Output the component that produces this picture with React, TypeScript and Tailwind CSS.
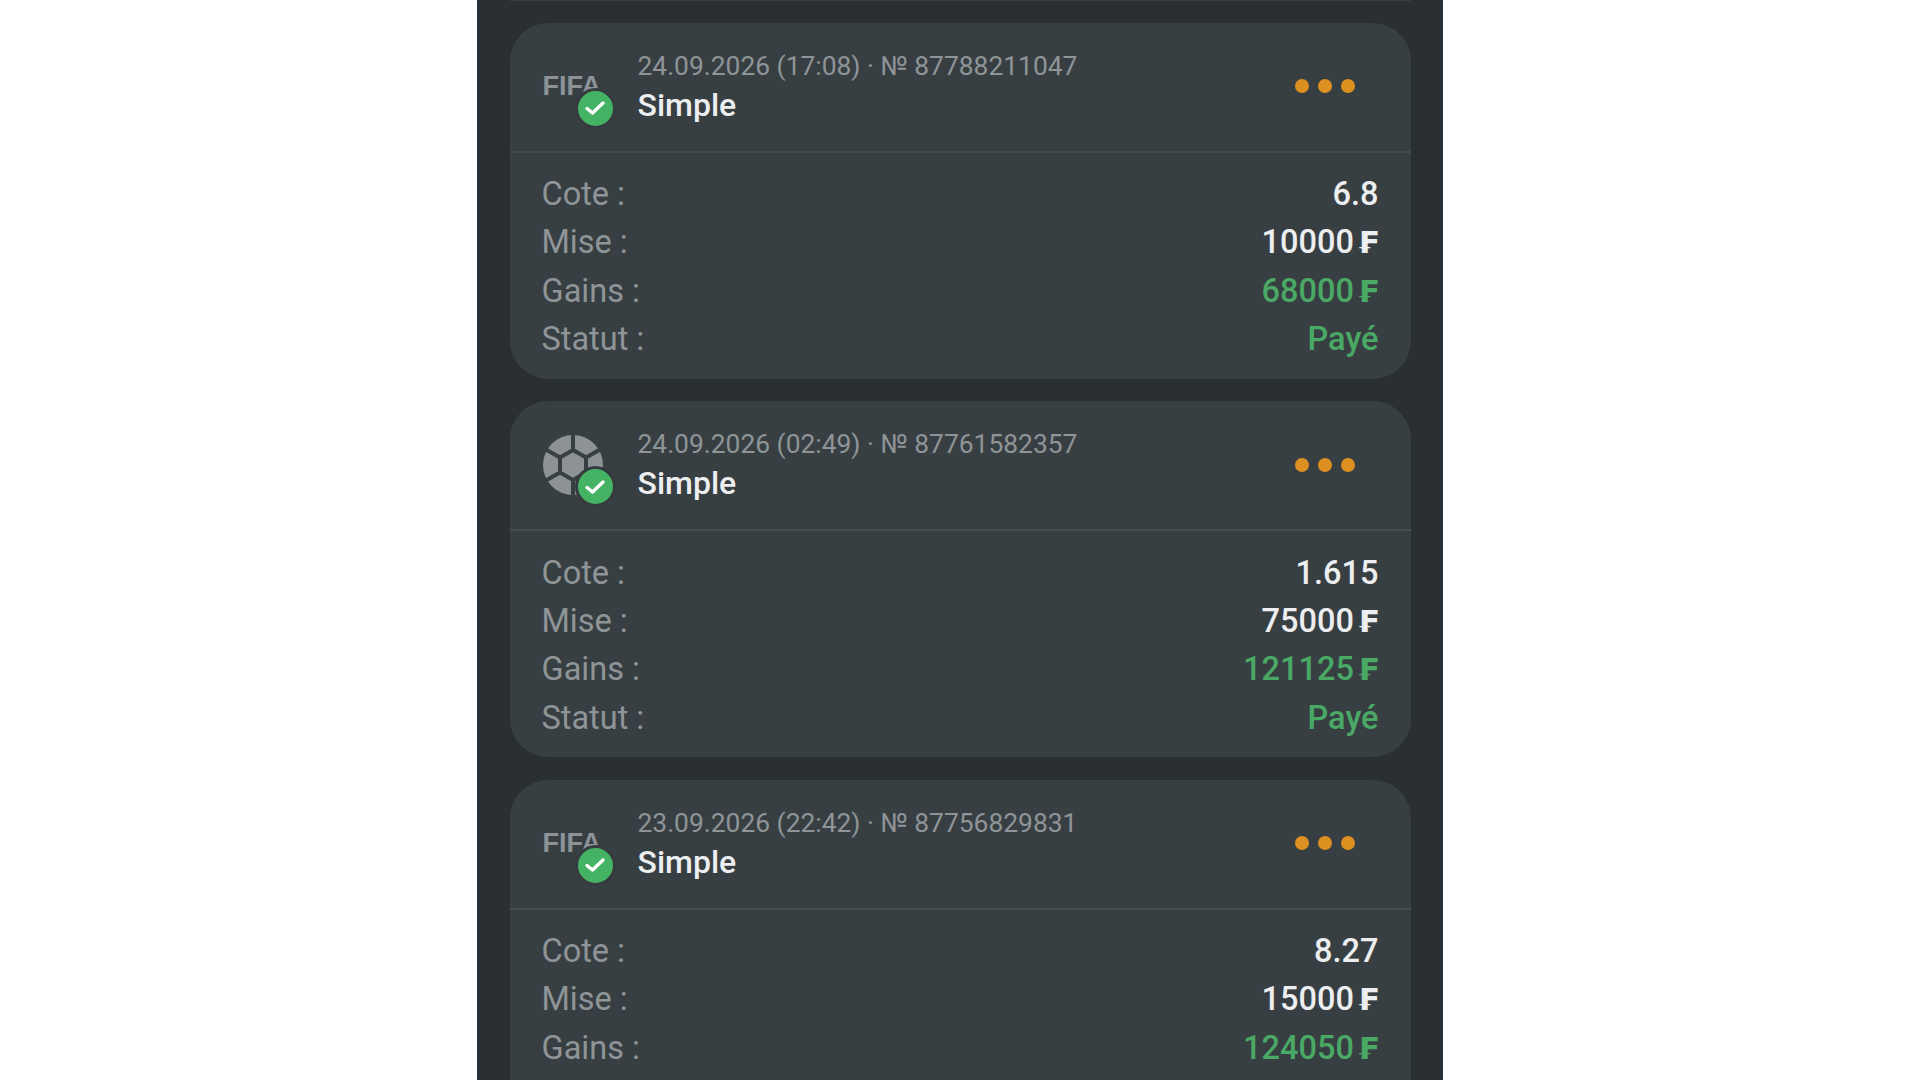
import React from "react";

type Bet = {
  date: string;
  icon: "fifa" | "ball";
  cote: string;
  mise: string;
  gains: string;
  statut?: string;
};

// the last card runs off the bottom of the screen before its Statut row
const bets: Bet[] = [
  { date: "24.09.2026 (17:08) · № 87788211047", icon: "fifa", cote: "6.8", mise: "10000", gains: "68000", statut: "Payé" },
  { date: "24.09.2026 (02:49) · № 87761582357", icon: "ball", cote: "1.615", mise: "75000", gains: "121125", statut: "Payé" },
  { date: "23.09.2026 (22:42) · № 87756829831", icon: "fifa", cote: "8.27", mise: "15000", gains: "124050" },
];

// BALL ICON ----------------------
const BallIcon = () => (
  <svg width="60" height="60" viewBox="0 0 60 60">
    <circle cx="30" cy="30" r="30" fill="#8d9296" />
    <g stroke="#383f43" strokeWidth="4" fill="#8d9296">
      <path d="M30 0V15M43 22.5L58 14M43 37.5L58 46M30 45V60M17 37.5L2 46M17 22.5L2 14" />
      <path d="M30 15L43 22.5V37.5L30 45L17 37.5V22.5Z" />
    </g>
  </svg>
);

const SportIcon = ({ type }: { type: Bet["icon"] }) => (
  <div className="relative w-[60px] h-[60px] flex items-center shrink-0">
    {type === "fifa" ? (
      <span className="font-['Liberation_Sans'] font-bold text-[27px] leading-none text-[#8d9296]">
        FIFA
      </span>
    ) : (
      <BallIcon />
    )}
    {/* CHECK BADGE */}
    <div className="absolute left-[32px] top-[31px] w-[41px] h-[41px] rounded-full bg-[#44b363] border-[3px] border-[#353b3e] flex items-center justify-center">
      <svg width="22" height="18" viewBox="0 0 22 18" fill="none">
        <path d="M3 9.5L8.5 14L19 4" stroke="#ffffff" strokeWidth="3.4" strokeLinecap="round" strokeLinejoin="round" />
      </svg>
    </div>
  </div>
);

const Row = ({ label, value, green }: { label: string; value: React.ReactNode; green?: boolean }) => (
  <div className="flex items-center justify-between h-[48.3px]">
    <span className="text-[#8f9497]">{label}</span>
    <span className={green ? "text-[#4aa964] font-medium" : "text-[#eceef0] font-medium"}>{value}</span>
  </div>
);

const Money = ({ v }: { v: string }) => (
  <>
    {v}
    <span className="ml-[3px] font-['DejaVu_Sans'] font-bold text-[31px]">₣</span>
  </>
);

const BetCard = ({ bet }: { bet: Bet }) => (
  <div className="bg-[#383f43] rounded-[38px] shrink-0 h-[356px]">
    {/* HEADER */}
    <div className="h-[128px] flex items-center pl-[33px] pr-[56px]">
      <SportIcon type={bet.icon} />
      <div className="ml-[35px] flex-1 -mt-[1px]">
        <div className="text-[26.4px] leading-[36px] text-[#8f9497]">{bet.date}</div>
        <div className="text-[32px] leading-[40px] mt-[1px] font-medium text-[#eceef0]">Simple</div>
      </div>
      <div className="flex gap-[9px] -mt-[1px]">
        <span className="w-[14px] h-[14px] rounded-full bg-[#dd9020]" />
        <span className="w-[14px] h-[14px] rounded-full bg-[#dd9020]" />
        <span className="w-[14px] h-[14px] rounded-full bg-[#dd9020]" />
      </div>
    </div>
    <div className="h-[2px] bg-[#454c52]" />
    {/* BODY */}
    <div className="px-[32px] pt-[17.5px] text-[32.5px] leading-[40px]">
      <Row label="Cote :" value={bet.cote} />
      <Row label="Mise :" value={<Money v={bet.mise} />} />
      <Row label="Gains :" value={<Money v={bet.gains} />} green />
      {bet.statut && <Row label="Statut :" value={bet.statut} green />}
    </div>
  </div>
);

export default function App() {
  return (
    <div className="h-screen bg-white flex justify-center overflow-hidden font-['Roboto',sans-serif]">
      <div className="w-[966px] h-[1080px] bg-[#292f32] px-[32.5px] flex flex-col gap-[22.5px] overflow-hidden">
        <div className="h-[1px] bg-[#383f43] shrink-0 -mb-[1px]" />
        {bets.map((bet) => (
          <BetCard key={bet.date} bet={bet} />
        ))}
      </div>
    </div>
  );
}
